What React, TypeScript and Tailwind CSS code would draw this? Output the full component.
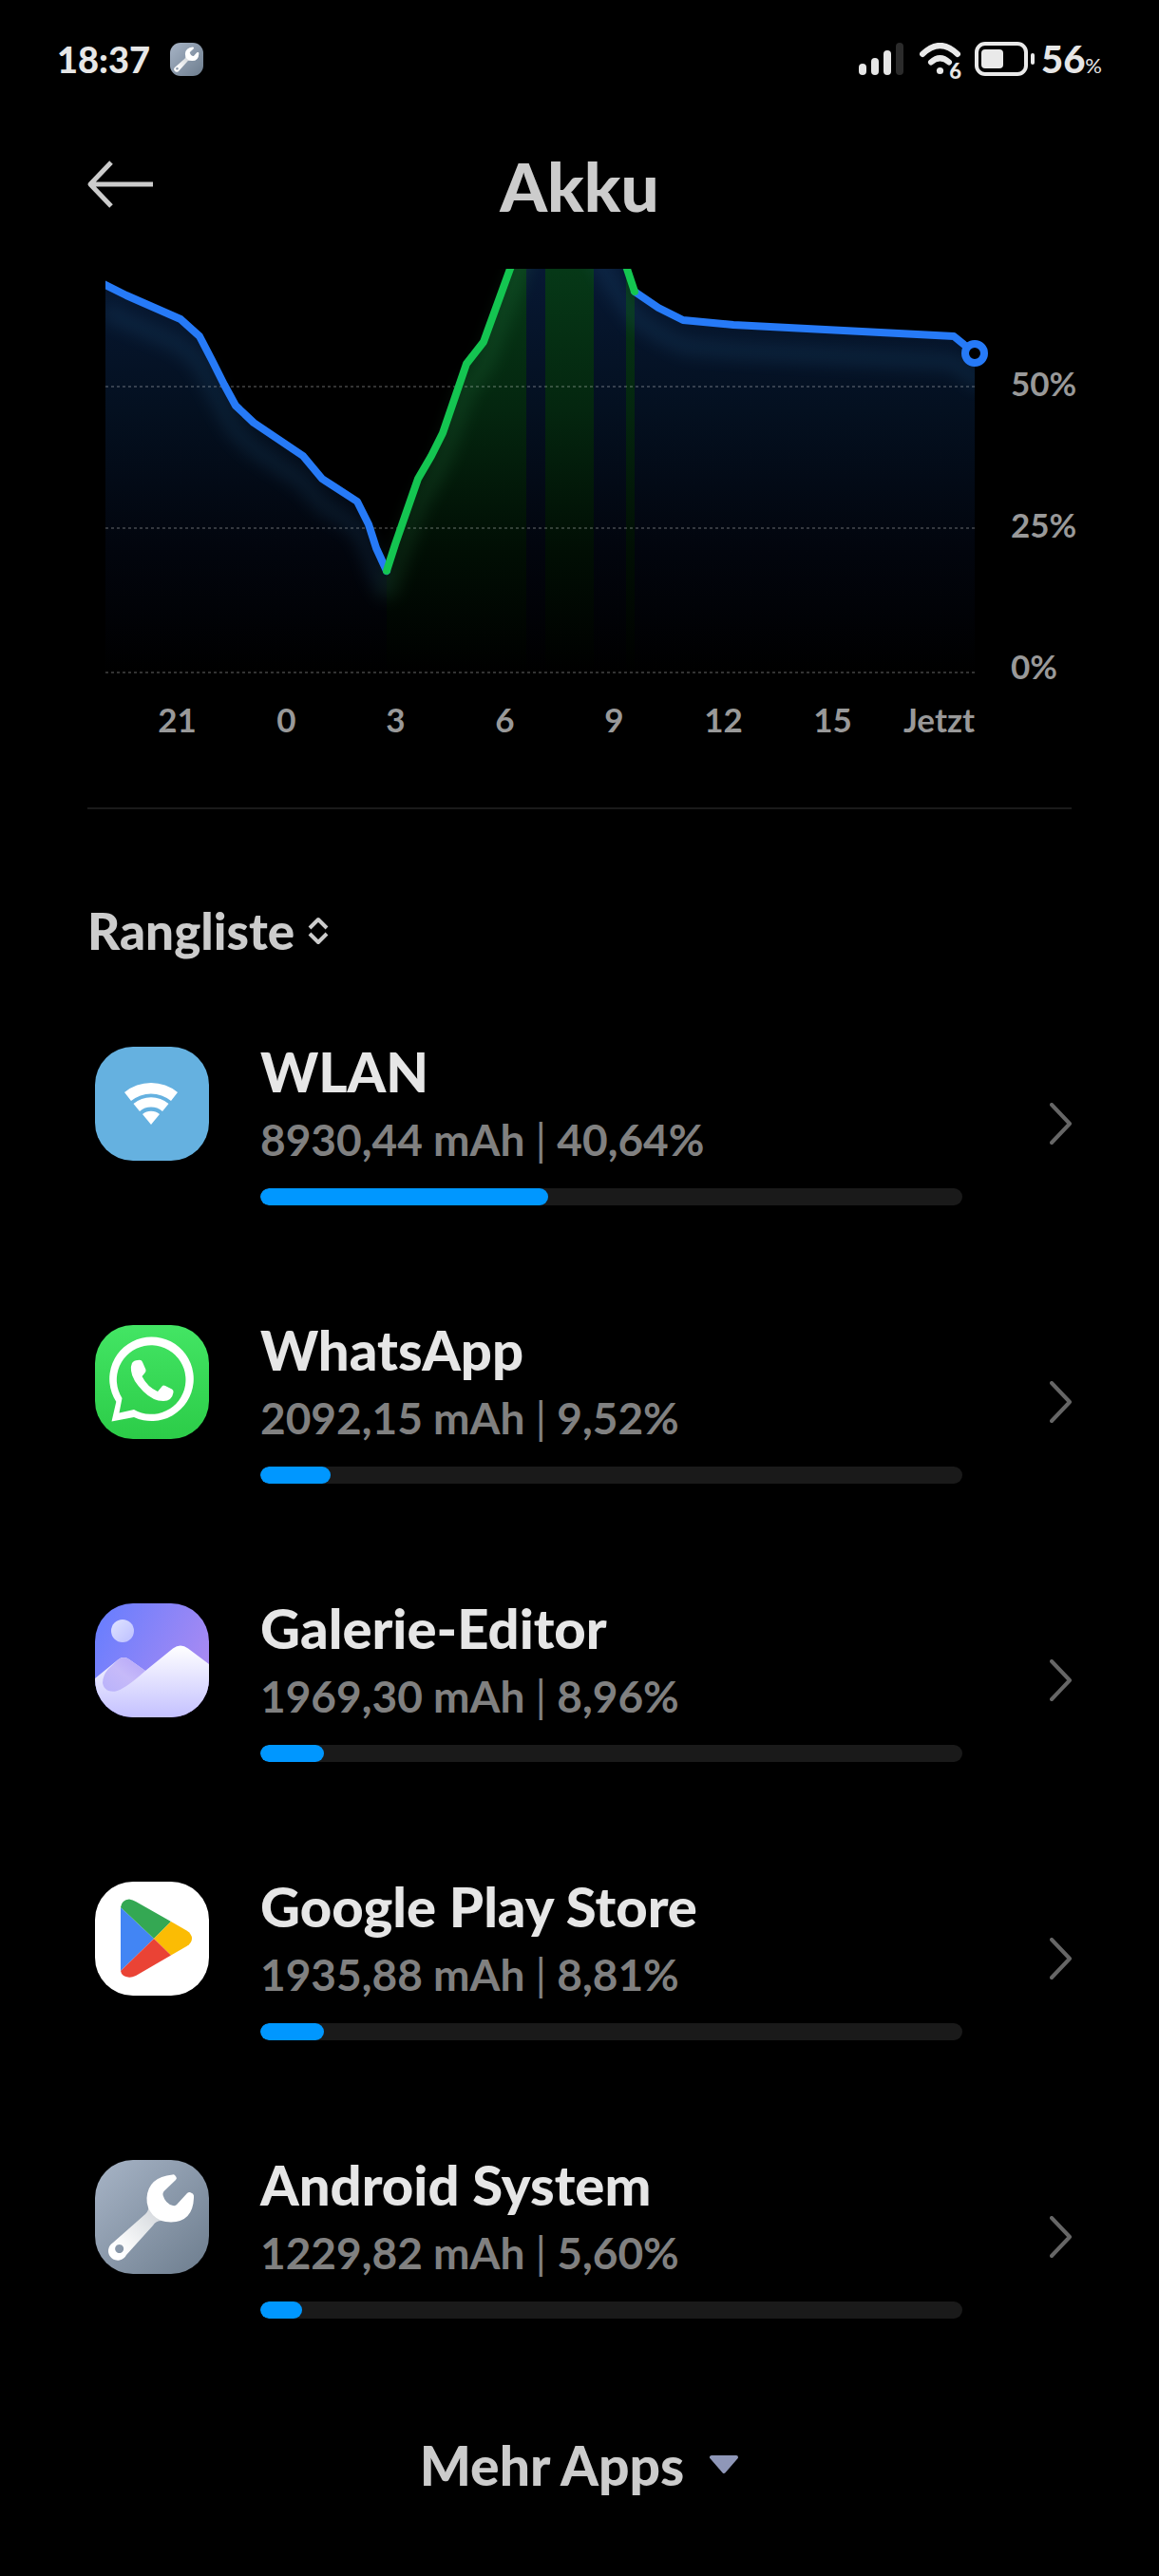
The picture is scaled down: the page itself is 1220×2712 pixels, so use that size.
import type { ReactNode } from "react"

type AppUsage = {
  name: string
  amount: string
  share: string
  percent: number
  icon: ReactNode
}

function WlanIcon() {
  return (
    <svg viewBox="0 0 120 120" className="w-full h-full bg-[#65b1e0]" fill="#fff" aria-hidden="true">
      <path d="M31 48A44 44 0 0 1 87 48L80 57A33 33 0 0 0 38 57Z" />
      <path d="M40.500 60A28.700 28.700 0 0 1 77.500 60L71 68A18.400 18.400 0 0 0 47 68Z" />
      <path d="M50 71A14.300 14.300 0 0 1 68 71L59 82Z" />
    </svg>
  )
}

function WhatsAppIcon() {
  return (
    <svg viewBox="0 0 120 120" className="w-full h-full" aria-hidden="true">
      <defs>
        <linearGradient id="wa-bg" x1="0" y1="0" x2="0" y2="1">
          <stop offset="0" stopColor="#43e564" />
          <stop offset="1" stopColor="#2ccc48" />
        </linearGradient>
      </defs>
      <rect width="120" height="120" fill="url(#wa-bg)" />
      <path
        fill="#fff"
        fillRule="evenodd"
        d="M17.500 101.500L22.300 80.800A44.300 44.300 0 1 1 41 97ZM28.500 77L25.500 92.500L41 89A36.300 36.300 0 1 0 28.500 77Z"
      />
      <path
        fill="#fff"
        d="M39 40Q41 37 45 37Q49 36 50 39L53.500 47Q54 49 52 51L49.500 54Q55 65 66 70L71 64Q72 63 74 64L81 67.500Q83 68.500 82.500 71Q81 80 72 80Q61 80 51 70Q39 58 38 48Q37.500 43 39 40Z"
      />
    </svg>
  )
}

function GalleryIcon() {
  return (
    <svg viewBox="0 0 120 120" className="w-full h-full" aria-hidden="true">
      <defs>
        <linearGradient id="ga-bg" x1="0" y1="0" x2="1" y2="0.5">
          <stop offset="0" stopColor="#647dff" />
          <stop offset="1" stopColor="#a88af2" />
        </linearGradient>
        <linearGradient id="ga-hill" x1="0" y1="0" x2="0" y2="1">
          <stop offset="0" stopColor="#ffffff" />
          <stop offset="1" stopColor="#c4c1ff" />
        </linearGradient>
        <linearGradient id="ga-lobe" x1="1" y1="0" x2="0" y2="1">
          <stop offset="0" stopColor="#b4a4f8" />
          <stop offset="0.5" stopColor="#c6baf9" />
          <stop offset="1" stopColor="#b9b2fb" />
        </linearGradient>
        <linearGradient id="ga-sun" x1="0" y1="0" x2="1" y2="1">
          <stop offset="0" stopColor="#dfe3ff" />
          <stop offset="1" stopColor="#bcbfff" />
        </linearGradient>
      </defs>
      <rect width="120" height="120" fill="url(#ga-bg)" />
      <circle cx="29" cy="29" r="12" fill="url(#ga-sun)" />
      <path
        fill="url(#ga-hill)"
        d="M0 79L24 59.500Q30 55 36 59L53 71L82 47.500Q90 41.500 98 47.500L120 64V120H0Z"
      />
      <path fill="url(#ga-lobe)" d="M24 59.500Q30 55 36 59L53 71Q32 90 22 92.500Q10 94 8 84Q8 76 14 69Z" />
    </svg>
  )
}

function PlayStoreIcon() {
  return (
    <svg viewBox="0 0 120 120" className="w-full h-full bg-white" aria-hidden="true">
      <path fill="#4285f4" d="M27 27L62 60L27 94Z" />
      <path fill="#34a853" d="M27 27Q28 19 36 18.500Q40 19 43 21L80 42L62 60Z" />
      <path fill="#fbbc04" d="M80 42L96.500 51.500Q102 55 102 60Q102 64.500 96.500 68L80 77.500L62 60Z" />
      <path fill="#ea4335" d="M62 60L80 77.500L43 99Q39 101 36 100.800Q28 100 27 94Z" />
    </svg>
  )
}

function WrenchIcon({ id }: { id: string }) {
  return (
    <svg viewBox="0 0 120 120" className="w-full h-full" aria-hidden="true">
      <defs>
        <linearGradient id={`${id}-bg`} x1="0" y1="0" x2="1" y2="1">
          <stop offset="0" stopColor="#a7b4c6" />
          <stop offset="1" stopColor="#6d7d8e" />
        </linearGradient>
        <linearGradient id={`${id}-grip`} x1="1" y1="0" x2="0" y2="1">
          <stop offset="0.100" stopColor="#d6dade" />
          <stop offset="0.800" stopColor="#ffffff" />
        </linearGradient>
      </defs>
      <rect width="120" height="120" fill={`url(#${id}-bg)`} />
      <path
        fill={`url(#${id}-grip)`}
        fillRule="evenodd"
        d="M56 49Q57 53 53 57L19 87A10 10 0 1 0 33 100L61 69Q64 64 70 64ZM25.700 89A4.500 4.500 0 1 1 25.600 89Z"
      />
      <path
        fill="#fff"
        d="M81.500 15.500Q83 15 84 16L85.500 18Q86.500 19.500 85 21L72.500 33Q71 35 71.500 37Q74 46 82 48Q85 48.500 86 47L97 35Q98.500 33.500 100 34L103 35.500Q104.500 37 104 40Q103 65 80 65.500Q68 65.500 61 58Q54 50 54.500 40Q56 18 81.500 15.500Z"
      />
    </svg>
  )
}

const APPS: AppUsage[] = [
  { name: "WLAN", amount: "8930,44 mAh", share: "40,64%", percent: 41, icon: <WlanIcon /> },
  { name: "WhatsApp", amount: "2092,15 mAh", share: "9,52%", percent: 10, icon: <WhatsAppIcon /> },
  { name: "Galerie-Editor", amount: "1969,30 mAh", share: "8,96%", percent: 9, icon: <GalleryIcon /> },
  { name: "Google Play Store", amount: "1935,88 mAh", share: "8,81%", percent: 9, icon: <PlayStoreIcon /> },
  { name: "Android System", amount: "1229,82 mAh", share: "5,60%", percent: 6, icon: <WrenchIcon id="sys" /> },
]

const HOURS = ["21", "0", "3", "6", "9", "12", "15"]

const DRAIN_START =
  "M-2 16L22 28L79 53L99 71L112 96L125 122L137 144L156 162L208 197L228 221L265 245L277 269L285 294L296 318"
const CHARGE = "M296 318L305 290L329 221L343 197L355 173L380 100L398 77L426 0L450 -66"
const CHARGE_END = "M534 -46L549 0L557 24"
const DRAIN_END = "M557 24L582 41L608 54L661 59L893 71L915 89"

function StatusBar() {
  return (
    <div className="h-[124px] px-[60px] flex items-center justify-between text-[#e6e6e6]">
      <div className="flex items-center gap-[21px]">
        <span className="text-[38px] leading-[40px] font-black">18:37</span>
        <div className="w-[35px] h-[35px] rounded-[11px] overflow-hidden">
          <WrenchIcon id="note" />
        </div>
      </div>
      <div className="flex items-center">
        <svg width="48" height="34" viewBox="0 0 48 34" fill="#e6e6e6" aria-hidden="true">
          <rect x="0" y="22" width="8" height="12" rx="4" />
          <rect x="13" y="16" width="8" height="18" rx="4" />
          <rect x="26" y="8" width="8" height="26" rx="4" />
          <rect x="39" y="0" width="8" height="34" rx="4" fill="#2b2b2b" />
        </svg>
        <div className="relative ml-4">
          <svg width="44" height="34" viewBox="0 0 44 34" fill="none" stroke="#e9e9e9" aria-hidden="true">
            <path d="M3 12Q21.500 -6 40 12" strokeWidth="6" strokeLinecap="round" />
            <path d="M12 20.500Q21.500 12 31 20.500" strokeWidth="6" strokeLinecap="round" />
            <circle cx="21.500" cy="29.500" r="3.600" fill="#e9e9e9" stroke="none" />
          </svg>
          <span className="absolute right-0 -bottom-2 text-[22px] leading-[24px] font-black">6</span>
        </div>
        <svg width="64" height="36" viewBox="0 0 64 36" className="ml-[14px]" aria-hidden="true">
          <rect x="2" y="2" width="52" height="32" rx="9" fill="none" stroke="#e9e9e9" strokeWidth="4" />
          <rect x="7" y="8" width="23" height="20" rx="4" fill="#e9e9e9" />
          <rect x="59" y="12" width="4" height="12" rx="2" fill="#e9e9e9" />
        </svg>
        <p className="ml-[6px] flex items-baseline">
          <span className="text-[40px] leading-[40px] font-black">56</span>
          <span className="text-[22px] leading-[24px]">%</span>
        </p>
      </div>
    </div>
  )
}

function BatteryChart() {
  return (
    <section className="pl-[111px] pr-[84px] pt-[19px] flex text-[35px] leading-[40px] font-bold text-[#999999]">
      <div className="flex-1">
        <svg viewBox="0 0 915 426" className="block w-full overflow-visible" role="img" aria-label="Akkuverlauf">
          <defs>
            <clipPath id="frame">
              <rect x="0" y="0" width="930" height="426" />
            </clipPath>
            <clipPath id="plot">
              <rect x="0" y="0" width="915" height="426" />
            </clipPath>
            <linearGradient id="blue-area" gradientUnits="userSpaceOnUse" x1="0" y1="0" x2="0" y2="426">
              <stop offset="0" stopColor="#071833" />
              <stop offset="0.350" stopColor="#041020" />
              <stop offset="0.700" stopColor="#02050d" />
              <stop offset="1" stopColor="#000000" />
            </linearGradient>
            <linearGradient id="green-area" gradientUnits="userSpaceOnUse" x1="0" y1="0" x2="0" y2="426">
              <stop offset="0" stopColor="#063817" />
              <stop offset="0.350" stopColor="#04260f" />
              <stop offset="0.700" stopColor="#010e04" />
              <stop offset="1" stopColor="#000000" />
            </linearGradient>
            <filter id="glow" filterUnits="userSpaceOnUse" x="-60" y="-120" width="1040" height="600">
              <feGaussianBlur stdDeviation="9" />
            </filter>
          </defs>

          <g clipPath="url(#plot)">
            <path
              fill="url(#blue-area)"
              d="M0 17L22 28L79 53L99 71L112 96L125 122L137 144L156 162L208 197L228 221L265 245L277 269L285 294L296 318V426H0Z"
            />
            <path fill="url(#green-area)" d="M296 318L305 290L329 221L343 197L355 173L380 100L398 77L426 0H443V426H296Z" />
            <rect x="443" y="0" width="20" height="426" fill="url(#blue-area)" />
            <rect x="463" y="0" width="51" height="426" fill="url(#green-area)" />
            <rect x="514" y="0" width="34" height="426" fill="url(#blue-area)" />
            <path fill="url(#green-area)" d="M548 0H549L557 24V426H548Z" />
            <path fill="url(#blue-area)" d="M557 24L582 41L608 54L661 59L893 71L915 89V426H557Z" />
            <g
              transform="translate(0 27)"
              fill="none"
              strokeWidth="16"
              strokeLinejoin="round"
              filter="url(#glow)"
              opacity="0.130"
            >
              <path d={DRAIN_START} stroke="#3f9ad8" />
              <path d={CHARGE} stroke="#4fd07a" />
              <path d="M490 -90L534 -10L557 24L582 41L608 54L661 59L893 71L925 95" stroke="#3f9ad8" />
            </g>
          </g>

          <g stroke="#ffffff" strokeOpacity="0.200" strokeWidth="2" strokeDasharray="3 3">
            <path d="M0 124H915" />
            <path d="M0 273H915" />
            <path d="M0 425H915" />
          </g>

          <g clipPath="url(#frame)" fill="none" strokeWidth="8" strokeLinejoin="round" strokeLinecap="round">
            <path d={DRAIN_START} stroke="#267af7" />
            <path d={DRAIN_END} stroke="#267af7" />
            <path d={CHARGE} stroke="#14c551" />
            <path d={CHARGE_END} stroke="#14c551" />
          </g>
          <circle cx="915" cy="89" r="10" fill="#000" stroke="#267af7" strokeWidth="8" />
        </svg>

        <div className="mt-7 pl-[18px] grid grid-cols-[repeat(7,115fr)_92fr]">
          {HOURS.map((hour) => (
            <span key={hour} className="text-center">
              {hour}
            </span>
          ))}
          <span className="text-right">Jetzt</span>
        </div>
      </div>

      <div className="w-[72px] ml-[38px] pt-[100px] flex flex-col gap-[109px]">
        <span>50%</span>
        <span>25%</span>
        <span>0%</span>
      </div>
    </section>
  )
}

function AppRow({ app }: { app: AppUsage }) {
  return (
    <li>
      <a href="#" className="flex">
        <div className="w-[120px] h-[120px] rounded-[40px] overflow-hidden shrink-0">{app.icon}</div>
        <div className="ml-[54px] flex-1">
          <h2 className="text-[58px] leading-[52px] font-black text-[#e6e6e6]">{app.name}</h2>
          <p className="mt-[22px] text-[46px] leading-[48px] font-bold text-[#808080]">
            {app.amount} <span className="font-normal">|</span> {app.share}
          </p>
          <div className="mt-[27px] h-[18px] rounded-full bg-[#1a1a1a] overflow-hidden">
            <div className="h-full rounded-full bg-[#0097ff]" style={{ width: `${app.percent}%` }} />
          </div>
        </div>
        <svg
          width="24"
          height="44"
          viewBox="0 0 24 44"
          className="ml-[92px] mt-[59px] shrink-0"
          fill="none"
          stroke="#666666"
          strokeWidth="4"
          strokeLinecap="round"
          strokeLinejoin="round"
          aria-hidden="true"
        >
          <path d="M2 2L21 22L2 42" />
        </svg>
      </a>
    </li>
  )
}

export default function App() {
  return (
    <div className="min-h-screen bg-black font-['Lato',sans-serif]">
      <StatusBar />

      <header className="h-[140px] px-[91px] grid grid-cols-[1fr_auto_1fr] items-center text-[#cccccc]">
        <button type="button" aria-label="Zurück" className="justify-self-start">
          <svg
            width="70"
            height="50"
            viewBox="0 0 70 50"
            fill="none"
            stroke="currentColor"
            strokeWidth="5"
            strokeLinejoin="round"
            aria-hidden="true"
          >
            <path d="M26 2L4 25L26 48M4 25H70" />
          </svg>
        </button>
        <h1 className="pt-1 text-[71px] leading-[80px] font-black">Akku</h1>
      </header>

      <main>
        <BatteryChart />

        <div className="mx-[92px] mt-[73px] h-[2px] bg-[#1a1a1a]" />

        <button type="button" className="ml-[92px] mt-[98px] flex items-center gap-[14px] text-[#cccccc]">
          <span className="text-[53px] leading-[60px] font-black">Rangliste</span>
          <svg
            width="22"
            height="30"
            viewBox="0 0 22 30"
            fill="none"
            stroke="currentColor"
            strokeWidth="4"
            strokeLinejoin="round"
            aria-hidden="true"
          >
            <path d="M2 12L11 3L20 12M2 18L11 27L20 18" />
          </svg>
        </button>

        <ul className="mt-[92px] pl-[100px] pr-[91px] flex flex-col gap-[126px]">
          {APPS.map((app) => (
            <AppRow key={app.name} app={app} />
          ))}
        </ul>

        <button
          type="button"
          className="mx-auto mt-[122px] mb-[85px] flex items-center gap-[26px] text-[57px] leading-[64px] font-black text-[#cccccc]"
        >
          Mehr Apps
          <svg width="32" height="20" viewBox="0 0 32 20" aria-hidden="true">
            <path
              d="M3 2H29L16 17Z"
              fill="#8f97b8"
              stroke="#8f97b8"
              strokeWidth="4"
              strokeLinejoin="round"
            />
          </svg>
        </button>
      </main>
    </div>
  )
}
